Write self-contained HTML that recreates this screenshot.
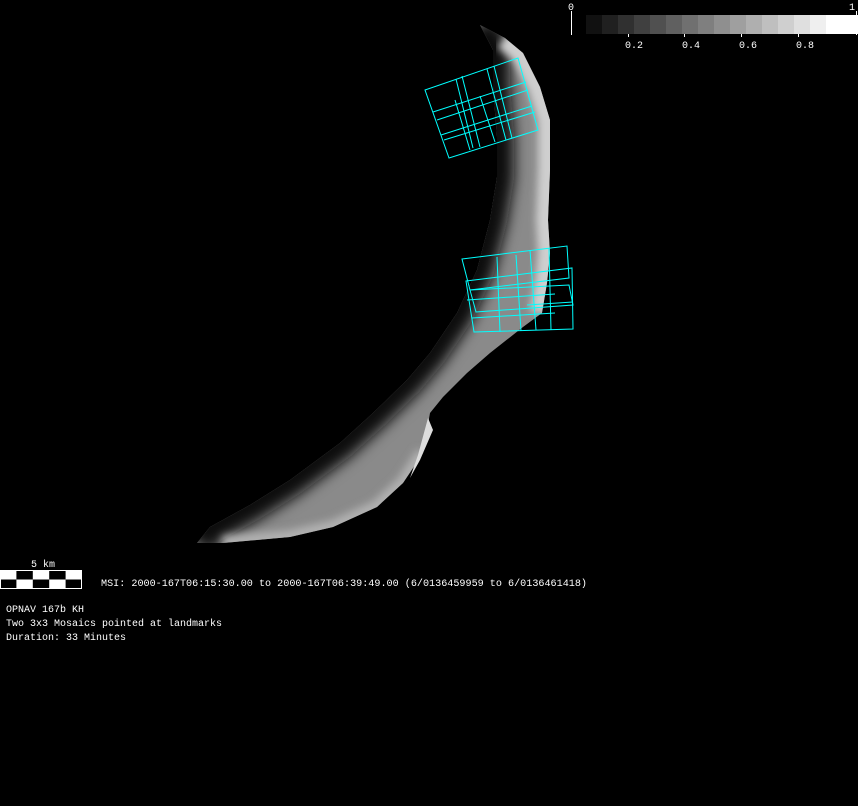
<!DOCTYPE html>
<html><head><meta charset="utf-8"><style>
html,body{margin:0;padding:0;background:#000;width:858px;height:806px;overflow:hidden}
svg{position:absolute;left:0;top:0}
text{font-family:"Liberation Mono","DejaVu Sans Mono",monospace;font-size:10px;fill:#fff}
</style></head><body>
<svg width="858" height="806" viewBox="0 0 858 806">
<defs>
<clipPath id="c"><path id="shape" d="M480,25 L505,38 L523,53 L540,87 L550,120 L550,170 L548,220 L550,253 L547,283 L542,313 L523,327 L490,353 L467,373 L443,397 L430,413 L423,453 L403,483 L377,507 L333,527 L290,537 L223,543 L197,543 L210,527 L250,505 L290,480 L340,443 L373,413 L407,380 L430,353 L457,313 L477,270 L490,220 L497,177 L497,137 L493,87 L493,50 Z"/></clipPath>
<filter id="b" x="-20%" y="-20%" width="140%" height="140%"><feGaussianBlur stdDeviation="7"/></filter>
<filter id="b2" x="-20%" y="-20%" width="140%" height="140%"><feGaussianBlur stdDeviation="4"/></filter>
</defs>
<rect width="858" height="806" fill="#000"/>
<g clip-path="url(#c)">
<rect x="180" y="20" width="380" height="530" fill="#8a8a8a"/>
<polyline points="480,25 493,50 493,87 497,137 497,177 490,220 477,270 457,313 430,353 407,380 373,413 340,443 290,480 250,505 210,527 197,543" fill="none" stroke="#111" stroke-width="34" filter="url(#b)"/>
<polyline points="505,38 523,53 540,87 550,120 550,170 548,220 550,253 547,283 542,313" fill="none" stroke="#cfcfcf" stroke-width="24" filter="url(#b2)"/>
<polyline points="423,453 403,483 377,507 333,527 290,537 223,543" fill="none" stroke="#b0b0b0" stroke-width="14" filter="url(#b2)"/>
</g>
<path d="M428,418 L433,430 L420,460 L410,478 L418,455 Z" fill="#ddd"/>
<!-- mosaic 1 -->
<g stroke="#00ffff" stroke-width="1" fill="none">
<polygon points="425,90 518,58 538,130 449,158"/>
<line x1="456" y1="79" x2="473" y2="148"/><line x1="487" y1="69" x2="506" y2="140"/>
<line x1="462" y1="76" x2="480" y2="147"/><line x1="494" y1="66" x2="512" y2="138"/>
<line x1="433" y1="112" x2="526" y2="82"/><line x1="441" y1="135" x2="532" y2="106"/>
<line x1="437" y1="120" x2="528" y2="90"/><line x1="444" y1="140" x2="535" y2="112"/>
<line x1="455" y1="100" x2="470" y2="150"/><line x1="480" y1="96" x2="495" y2="142"/>
</g>
<!-- mosaic 2 -->
<g stroke="#00ffff" stroke-width="1" fill="none">
<polygon points="462,259 567,246 569,278 470,290"/>
<polygon points="466,281 572,268 573,329 474,332"/>
<polygon points="470,290 569,285 573,305 476,312"/>
<line x1="497" y1="257" x2="500" y2="332"/><line x1="530" y1="250" x2="536" y2="330"/>
<line x1="516" y1="255" x2="521" y2="331"/><line x1="549" y1="248" x2="551" y2="330"/>
<line x1="467" y1="300" x2="555" y2="294"/><line x1="472" y1="318" x2="555" y2="313"/>
<line x1="527" y1="305" x2="573" y2="302"/>
</g>
<!-- colorbar -->
<g>
<rect x="586" y="15" width="16" height="19" fill="#111"/><rect x="602" y="15" width="16" height="19" fill="#202020"/><rect x="618" y="15" width="16" height="19" fill="#303030"/><rect x="634" y="15" width="16" height="19" fill="#404040"/><rect x="650" y="15" width="16" height="19" fill="#505050"/><rect x="666" y="15" width="16" height="19" fill="#606060"/><rect x="682" y="15" width="16" height="19" fill="#707070"/><rect x="698" y="15" width="16" height="19" fill="#7f7f7f"/><rect x="714" y="15" width="16" height="19" fill="#8f8f8f"/><rect x="730" y="15" width="16" height="19" fill="#9f9f9f"/><rect x="746" y="15" width="16" height="19" fill="#afafaf"/><rect x="762" y="15" width="16" height="19" fill="#bfbfbf"/><rect x="778" y="15" width="16" height="19" fill="#cfcfcf"/><rect x="794" y="15" width="16" height="19" fill="#dfdfdf"/><rect x="810" y="15" width="16" height="19" fill="#efefef"/><rect x="826" y="15" width="32" height="19" fill="#fff"/>
</g>
<g stroke="#fff" stroke-width="1">
<line x1="571.5" y1="11" x2="571.5" y2="35"/><line x1="856.5" y1="11" x2="856.5" y2="35"/>
<line x1="628.5" y1="34" x2="628.5" y2="37"/><line x1="684.5" y1="34" x2="684.5" y2="37"/><line x1="741.5" y1="34" x2="741.5" y2="37"/><line x1="798.5" y1="34" x2="798.5" y2="37"/>
</g>
<text x="568" y="10">0</text><text x="849" y="10">1</text>
<text x="625" y="48">0.2</text><text x="682" y="48">0.4</text><text x="739" y="48">0.6</text><text x="796" y="48">0.8</text>
<!-- scale bar -->
<rect x="0" y="570" width="82" height="19" fill="#fff"/>
<rect x="16.4" y="571" width="16.4" height="8.5" fill="#000"/><rect x="49.2" y="571" width="16.4" height="8.5" fill="#000"/>
<rect x="1" y="579.5" width="15.4" height="8.5" fill="#000"/><rect x="32.8" y="579.5" width="16.4" height="8.5" fill="#000"/><rect x="65.6" y="579.5" width="15.4" height="8.5" fill="#000"/>
<text x="31" y="567">5 km</text>
<text x="101" y="586" textLength="486" lengthAdjust="spacingAndGlyphs">MSI:  2000-167T06:15:30.00 to 2000-167T06:39:49.00 (6/0136459959 to 6/0136461418)</text>
<text x="6" y="612">OPNAV 167b KH</text>
<text x="6" y="626">Two 3x3 Mosaics pointed at landmarks</text>
<text x="6" y="640">Duration: 33 Minutes</text>
</svg>
</body></html>
